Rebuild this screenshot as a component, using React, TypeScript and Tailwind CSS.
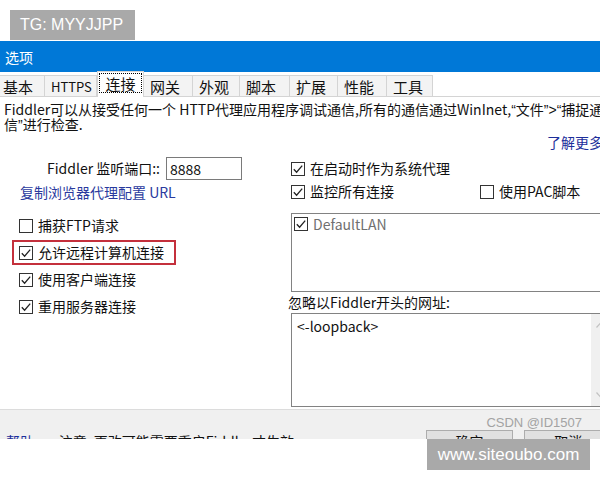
import React from 'react';

const font = { fontFamily: '"Noto Sans CJK SC", "Noto Sans", sans-serif' };
const latin = { fontFamily: '"Liberation Sans", Arial, sans-serif' };

const tabs: { label: string; w: string; active?: boolean }[] = [
  { label: '基本', w: 'w-[45px] pl-[3px] text-[15px]' },
  { label: 'HTTPS', w: 'w-[52px] pl-[6px] text-[13px]' },
  { label: '连接', w: 'w-[47px] text-[15px]', active: true },
  { label: '网关', w: 'w-[49px] pl-[6px] text-[15px]' },
  { label: '外观', w: 'w-[47px] pl-[6px] text-[15px]' },
  { label: '脚本', w: 'w-[50px] pl-[6px] text-[15px]' },
  { label: '扩展', w: 'w-[48px] pl-[6px] text-[15px]' },
  { label: '性能', w: 'w-[49px] pl-[6px] text-[15px]' },
  { label: '工具', w: 'w-[46px] pl-[6px] text-[15px]' },
];

const Check: React.FC<{ on?: boolean }> = ({ on }) => (
  <svg width="14" height="14" viewBox="0 0 14 14" className="shrink-0">
    <rect x="0.5" y="0.5" width="13" height="13" fill="white" stroke="#333" />
    {on && <path d="M2.8 7.2 L5.6 10.2 L11.2 3.6" fill="none" stroke="#222" strokeWidth="1.3" />}
  </svg>
);

const CheckRow: React.FC<{ on?: boolean; label: string }> = ({ on, label }) => (
  <div className="flex items-center gap-[5px] whitespace-nowrap">
    <Check on={on} />
    <span>{label}</span>
  </div>
);

export default function App() {
  return (
    <div className="w-[600px] h-[480px] overflow-hidden bg-white flex flex-col text-[14px] text-[#111]" style={font}>
      {/* top watermark */}
      <div className="h-[41px] shrink-0 pl-[10px] pt-[10px]">
        <div className="w-[125px] h-[30px] bg-[#a9a9a9] text-white text-[16px] flex items-center pl-[10px]" style={latin}>
          TG: MYYJJPP
        </div>
      </div>

      {/* dialog, clipped at the bottom */}
      <div className="h-[398px] shrink-0 w-[612px] overflow-hidden flex flex-col">
        {/* title bar */}
        <div className="h-[31px] shrink-0 bg-[#0078d7] text-white flex items-center pl-[5px] leading-none">选项</div>

        {/* tabs */}
        <div className="h-[25px] shrink-0 flex items-end border-b border-[#d4d4d4] bg-white">
          {tabs.map((t) =>
            t.active ? (
              <div key={t.label} className={`${t.w} h-[26px] -mb-px bg-white border-x border-t border-[#d4d4d4] p-[1px] pb-[4px]`}>
                <div className="h-full border border-dotted border-black flex items-center justify-center leading-none">
                  {t.label}
                </div>
              </div>
            ) : (
              <div
                key={t.label}
                className={`${t.w} h-[21px] bg-[#f3f3f3] border-t border-r border-[#d4d4d4] flex items-center leading-none whitespace-nowrap`}
              >
                {t.label}
              </div>
            )
          )}
        </div>

        {/* page content */}
        <div className="h-[312px] shrink-0 flex flex-col pt-[5px]">
          <div className="pl-[4px] leading-[15px] whitespace-nowrap">
            <div className="h-[15px]">
              Fiddler可以从接受任何一个 HTTP代理应用程序调试通信,所有的通信通过WinInet,
              <span style={latin}>“</span>文件<span style={latin}>”&gt;“</span>捕捉通信
            </div>
            <div className="h-[15px]">
              信<span style={latin}>”</span>进行检查.
            </div>
          </div>
          <div className="h-[15px] text-right pr-[9px] leading-[15px] mt-[3px] text-[#1d2f9b] whitespace-nowrap">了解更多</div>

          <div className="grid grid-cols-[288px_1fr] mt-[7px]">
            {/* left column */}
            <div className="flex flex-col">
              <div className="flex items-center h-[23px]">
                <div className="w-[160px] text-right whitespace-nowrap">Fiddler 监听端口::</div>
                <div className="ml-[6px] w-[76px] h-[23px] border border-[#7a7a7a] flex items-center pl-[3px] leading-none">8888</div>
              </div>
              <div className="pl-[20px] mt-[4px] h-[16px] leading-[16px] text-[#2a3a9e] whitespace-nowrap">复制浏览器代理配置 URL</div>
              <div className="mt-[12px] h-[27px] flex items-center pl-[19px]">
                <CheckRow label="捕获FTP请求" />
              </div>
              <div className="h-[27px] flex items-center pl-[12px]">
                <div className="w-[164px] h-[25px] border-2 border-[#c4303c] flex items-center pl-[5px]">
                  <CheckRow on label="允许远程计算机连接" />
                </div>
              </div>
              <div className="h-[27px] flex items-center pl-[19px]">
                <CheckRow on label="使用客户端连接" />
              </div>
              <div className="h-[27px] flex items-center pl-[19px]">
                <CheckRow on label="重用服务器连接" />
              </div>
            </div>

            {/* right column */}
            <div className="flex flex-col">
              <div className="h-[23px] flex items-center pl-[3px]">
                <CheckRow on label="在启动时作为系统代理" />
              </div>
              <div className="h-[23px] grid grid-cols-[189px_1fr] items-center pl-[3px]">
                <CheckRow on label="监控所有连接" />
                <CheckRow label="使用PAC脚本" />
              </div>
              <div className="ml-[3px] mt-[10px] h-[79px] border border-[#828282] bg-white pt-[3px] pl-[2px]">
                <div className="flex items-center gap-[5px] text-[#707070] leading-none">
                  <Check on />
                  <span>DefaultLAN</span>
                </div>
              </div>
              <div className="h-[21px] flex items-center whitespace-nowrap">忽略以Fiddler开头的网址:</div>
              <div className="ml-[3px] h-[94px] border border-[#828282] flex">
                <div className="flex-1 pl-[5px] pt-[5px] leading-[14px]">&lt;-loopback&gt;</div>
                <div className="w-[18px] bg-[#f0f0f0] flex flex-col justify-between items-center py-[8px] mr-[2px]">
                  <svg width="9" height="6" viewBox="0 0 9 6">
                    <path d="M0.5 5.5 L4.5 1 L8.5 5.5" fill="none" stroke="#c2c2c2" strokeWidth="1.2" />
                  </svg>
                  <svg width="9" height="6" viewBox="0 0 9 6">
                    <path d="M0.5 0.5 L4.5 5 L8.5 0.5" fill="none" stroke="#c2c2c2" strokeWidth="1.2" />
                  </svg>
                </div>
              </div>
            </div>
          </div>
        </div>

        {/* footer */}
        <div className="relative flex-1 bg-[#f0f0f0] border-t border-[#dcdcdc] flex items-start pt-[20px]">
          <div className="absolute right-[30px] top-[6px] text-[13px] text-[#a3a3a3] leading-none" style={latin}>
            CSDN @ID1507
          </div>
          <div className="pl-[6px] w-[59px] pt-[4px] text-[#1d2f9b] leading-none whitespace-nowrap">帮助</div>
          <div className="pt-[4px] leading-none whitespace-nowrap w-[368px]">注意: 更改可能需要重启Fiddler才生效</div>
          <div className="w-[88px] h-[23px] border border-[#adadad] bg-[#e1e1e1] flex justify-center pt-[3px] leading-none">确定</div>
          <div className="ml-[11px] w-[88px] h-[23px] border border-[#adadad] bg-[#e1e1e1] flex justify-center pt-[3px] leading-none">取消</div>
        </div>
      </div>

      {/* bottom watermark */}
      <div className="flex-1 flex justify-end pr-[10px]">
        <div className="w-[163px] h-[31px] bg-[#a9a9a9] text-white text-[17px] flex items-center justify-center" style={latin}>
          www.siteoubo.com
        </div>
      </div>
    </div>
  );
}
